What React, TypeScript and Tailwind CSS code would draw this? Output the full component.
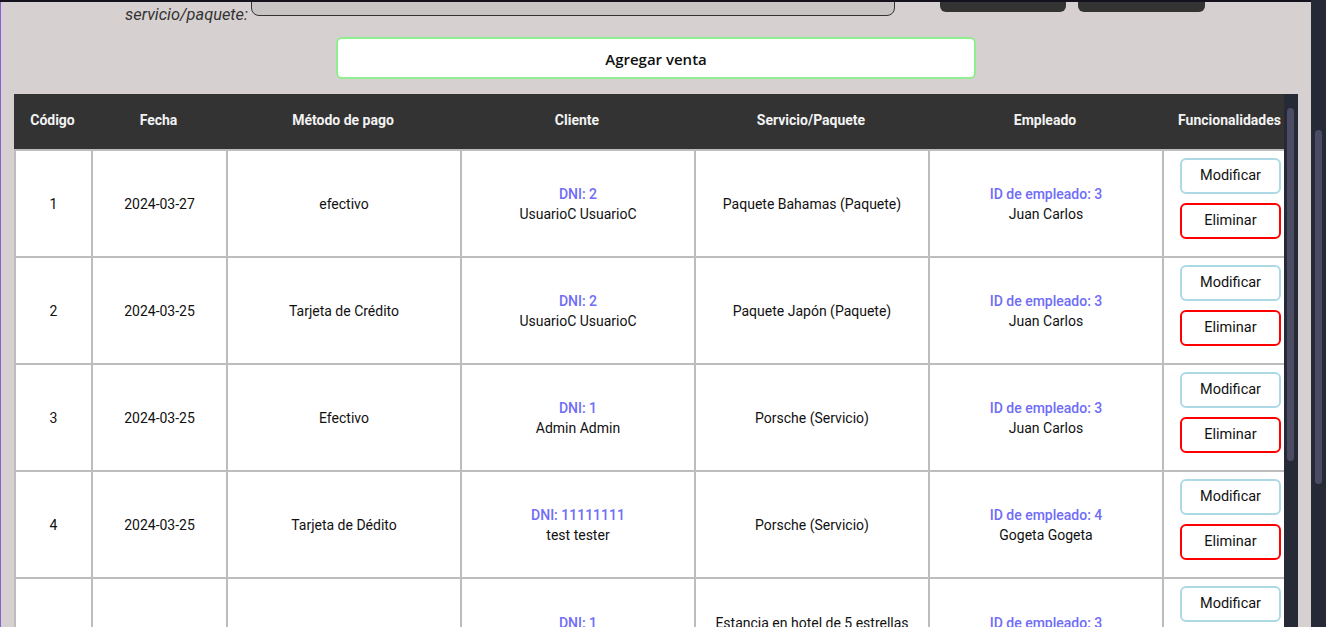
import React from "react";

type Row = {
  code: string;
  date: string;
  method: string;
  dni: string;
  client: string;
  service: string;
  empId: string;
  emp: string;
};

const rows: Row[] = [
  { code: "1", date: "2024-03-27", method: "efectivo", dni: "DNI: 2", client: "UsuarioC UsuarioC", service: "Paquete Bahamas (Paquete)", empId: "ID de empleado: 3", emp: "Juan Carlos" },
  { code: "2", date: "2024-03-25", method: "Tarjeta de Crédito", dni: "DNI: 2", client: "UsuarioC UsuarioC", service: "Paquete Japón (Paquete)", empId: "ID de empleado: 3", emp: "Juan Carlos" },
  { code: "3", date: "2024-03-25", method: "Efectivo", dni: "DNI: 1", client: "Admin Admin", service: "Porsche (Servicio)", empId: "ID de empleado: 3", emp: "Juan Carlos" },
  { code: "4", date: "2024-03-25", method: "Tarjeta de Dédito", dni: "DNI: 11111111", client: "test tester", service: "Porsche (Servicio)", empId: "ID de empleado: 4", emp: "Gogeta Gogeta" },
  { code: "5", date: "2024-03-25", method: "efectivo", dni: "DNI: 1", client: "Admin Admin", service: "Estancia en hotel de 5 estrellas (Servicio)", empId: "ID de empleado: 3", emp: "Juan Carlos" },
];

const cols = "grid grid-cols-[77px_135px_234px_234px_234px_234px_135px] w-[1283px]";
const cell =
  "h-[107px] border-t-2 border-l-2 border-[#bdbdbd] bg-white flex flex-col items-center justify-center text-center px-2 text-[14px] leading-[20px] text-[#111]";

export default function App() {
  return (
    <div className="flex h-[627px] w-full overflow-hidden bg-[#d6d0d0]" style={{ fontFamily: "Roboto, 'Noto Sans', sans-serif" }}>
      <div className="flex flex-1 flex-col min-w-0">
        <div className="h-[2px] bg-[#15111f]" />
        <div className="flex flex-1 flex-col overflow-hidden border-l border-[#8a5fd6] min-h-0">
          {/* top form row (scrolled off partly) */}
          <div className="-mt-[26px] flex h-[40px] items-start pl-[124px]">
            <span className="mt-[27px] w-[126px] text-[16.4px] italic leading-[24px] text-[#333] whitespace-nowrap">servicio/paquete:</span>
            <div className="h-[40px] w-[644px] rounded-[8px] border border-[#333] bg-[#c8c4c4]" />
            <div className="ml-[45px] h-[36px] w-[126px] rounded-[6px] bg-[#333333]" />
            <div className="ml-[12px] h-[36px] w-[127px] rounded-[6px] bg-[#333333]" />
          </div>

          <div className="mt-[21px] flex justify-center">
            <button
              className="h-[42px] w-[640px] rounded-[6px] border-2 border-[#90ee90] bg-white pt-[2px] text-[15px] font-semibold text-[#111]"
              style={{ fontFamily: "'Open Sans', 'Noto Sans', sans-serif" }}
            >
              Agregar venta
            </button>
          </div>

          <div className="mx-[13px] mt-[15px] flex min-h-0 flex-1">
            <div className="min-w-0 flex-1 overflow-hidden">
              <div className={`${cols} h-[55px] bg-[#333333] text-[14px] font-bold text-[#f2f2f2]`}>
                {["Código", "Fecha", "Método de pago", "Cliente", "Servicio/Paquete", "Empleado", "Funcionalidades"].map((h) => (
                  <div key={h} className="flex items-center justify-center whitespace-nowrap pb-[2px]">
                    {h}
                  </div>
                ))}
              </div>
              {rows.map((r, i) => {
                const c = i === rows.length - 1 ? `${cell} pt-[3px]` : cell;
                return (
                  <div key={r.code} className={cols}>
                    <div className={c}>{r.code}</div>
                    <div className={c}>{r.date}</div>
                    <div className={c}>{r.method}</div>
                    <div className={c}>
                      <span className="font-medium text-[#6f6cf7]">{r.dni}</span>
                      <span>{r.client}</span>
                    </div>
                    <div className={c}>{r.service}</div>
                    <div className={c}>
                      <span className="font-medium text-[#6f6cf7]">{r.empId}</span>
                      <span>{r.emp}</span>
                    </div>
                    <div className={`${cell} pb-[10px]`}>
                      <button className="h-[36px] w-[101px] rounded-[6px] border-2 border-[#add8e6] bg-white text-[14.5px] text-[#111]">
                        Modificar
                      </button>
                      <button className="mt-[9px] h-[36px] w-[101px] rounded-[6px] border-2 border-[#ff0000] bg-white text-[14.5px] text-[#111]">
                        Eliminar
                      </button>
                    </div>
                  </div>
                );
              })}
            </div>
            <div className="relative w-[14px] shrink-0 bg-[#262a36]">
              <div className="absolute left-[3px] top-[14px] h-[353px] w-[7px] rounded-full bg-[#4b4c64]" />
            </div>
          </div>
        </div>
      </div>
      <div className="relative h-full w-[15px] shrink-0 bg-[#262a36]">
        <div className="absolute left-[4px] top-[130px] h-[354px] w-[7px] rounded-full bg-[#4b4c64]" />
      </div>
    </div>
  );
}
